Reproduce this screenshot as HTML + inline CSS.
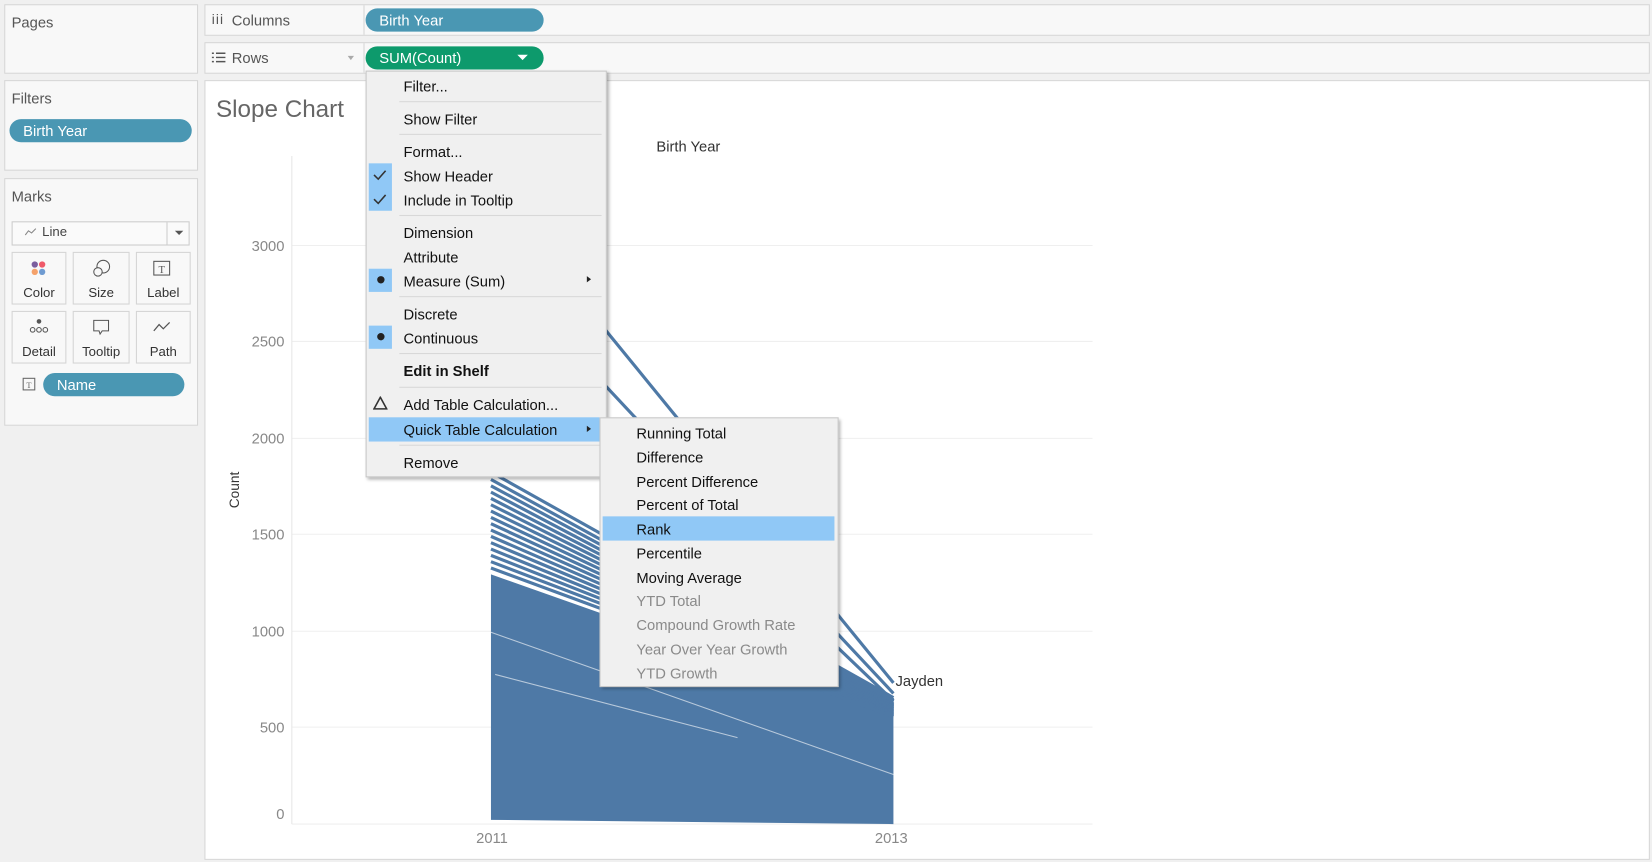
<!DOCTYPE html>
<html><head><meta charset="utf-8">
<style>
*{margin:0;padding:0;box-sizing:border-box}
html,body{width:1652px;height:862px;overflow:hidden;background:#f0f0f0}
body{font-family:"Liberation Sans",sans-serif;color:#333}
#s{position:absolute;left:0;top:0;width:1568px;height:818px;transform:scale(1.05357,1.0538);transform-origin:0 0;background:#f0f0f0}
.a{position:absolute}
.panel{position:absolute;background:#f8f8f8;border:1px solid #d6d6d6}
.t{position:absolute;font-size:14px;white-space:nowrap}
.pill{position:absolute;border-radius:12px;color:#fff;font-size:14px;padding-left:13px;line-height:22px}
.card{position:absolute;background:#f8f8f8;border:1px solid #d4d4d4;font-size:12.5px;text-align:center}
.card span{position:absolute;left:0;right:0;bottom:3px}
.mi{position:absolute;left:35px;font-size:14px;color:#111;white-space:nowrap}
.sep{position:absolute;left:31px;right:4px;height:1px;background:#d8d8d8}
.hl{position:absolute;background:#90c8f6}
.si{position:absolute;left:34px;font-size:14px;color:#111;white-space:nowrap}
.gr{color:#8a8a8a}
</style></head><body><div id="s">
<div class="panel" style="left:4px;top:4px;width:184px;height:66px"></div>
<div class="t" style="left:11px;top:13px;color:#555">Pages</div>
<div class="panel" style="left:4px;top:76px;width:184px;height:86px"></div>
<div class="t" style="left:11px;top:85px;color:#555">Filters</div>
<div class="pill" style="left:9px;top:113px;width:173px;background:#4a97b3">Birth Year</div>
<div class="panel" style="left:4px;top:169px;width:184px;height:235px"></div>
<div class="t" style="left:11px;top:178px;color:#555">Marks</div>
<div class="a" style="left:11px;top:210px;width:169px;height:23px;border:1px solid #ccc;background:#fafafa"></div>
<div class="a" style="left:158px;top:211px;width:1px;height:21px;background:#ccc"></div>
<svg class="a" style="left:23px;top:215px" width="12" height="10"><path d="M1 8 L4 4 L7 6 L11 2" stroke="#888" fill="none"/></svg>
<div class="t" style="left:40px;top:213px;font-size:12.5px;color:#444">Line</div>
<div class="a" style="left:166px;top:219px;border:4px solid transparent;border-top:4px solid #555;border-bottom:0"></div>
<div class="card" style="left:11px;top:239px;width:52px;height:50px"><span>Color</span></div>
<div class="card" style="left:69px;top:239px;width:54px;height:50px"><span>Size</span></div>
<div class="card" style="left:129px;top:239px;width:52px;height:50px"><span>Label</span></div>
<div class="card" style="left:11px;top:295px;width:52px;height:50px"><span>Detail</span></div>
<div class="card" style="left:69px;top:295px;width:54px;height:50px"><span>Tooltip</span></div>
<div class="card" style="left:129px;top:295px;width:52px;height:50px"><span>Path</span></div>
<svg class="a" style="left:28px;top:247px" width="18" height="18"><circle cx="5" cy="4" r="3" fill="#7b5e9e"/><circle cx="12" cy="4" r="3" fill="#ef5a6a"/><circle cx="5" cy="11" r="3" fill="#f5a26b"/><circle cx="12" cy="11" r="3" fill="#6f9bd1"/></svg>
<svg class="a" style="left:87px;top:245px" width="20" height="20"><circle cx="11" cy="8" r="6" stroke="#555" fill="none"/><circle cx="6" cy="13" r="4" stroke="#555" fill="#f8f8f8"/></svg>
<svg class="a" style="left:145px;top:246px" width="18" height="18"><rect x="1" y="2" width="15" height="13" stroke="#555" fill="none"/><text x="8.5" y="13" font-size="10" text-anchor="middle" fill="#555" font-family="Liberation Serif">T</text></svg>
<svg class="a" style="left:27px;top:302px" width="20" height="16"><circle cx="10" cy="3" r="2.2" fill="#555"/><circle cx="4" cy="11" r="2.2" stroke="#555" fill="none"/><circle cx="10" cy="11" r="2.2" stroke="#555" fill="none"/><circle cx="16" cy="11" r="2.2" stroke="#555" fill="none"/></svg>
<svg class="a" style="left:87px;top:302px" width="18" height="18"><path d="M2 2 H16 V12 H10 L8 15 L7 12 H2 Z" stroke="#555" fill="none"/></svg>
<svg class="a" style="left:145px;top:304px" width="18" height="12"><path d="M1 10 L6 4 L10 8 L16 2" stroke="#555" fill="none" stroke-width="1.2"/></svg>
<svg class="a" style="left:21px;top:358px" width="14" height="14"><rect x="1" y="1" width="11" height="11" stroke="#666" fill="none"/><text x="6.5" y="10" font-size="8" text-anchor="middle" fill="#666" font-family="Liberation Serif">T</text></svg>
<div class="pill" style="left:41px;top:354px;width:134px;background:#4a97b3">Name</div>

<div class="panel" style="left:194px;top:4px;width:1372px;height:30px;background:#f8f8f8"></div>
<div class="a" style="left:345px;top:5px;width:1px;height:28px;background:#d6d6d6"></div>
<div class="t" style="left:201px;top:11px;color:#555;font-size:13px;letter-spacing:1px">iii</div>
<div class="t" style="left:220px;top:11px;color:#555">Columns</div>
<div class="pill" style="left:347px;top:8px;width:169px;background:#4a97b3">Birth Year</div>
<div class="panel" style="left:194px;top:40px;width:1372px;height:30px;background:#f8f8f8"></div>
<div class="a" style="left:345px;top:41px;width:1px;height:28px;background:#d6d6d6"></div>
<svg class="a" style="left:201px;top:49px" width="13" height="11"><path d="M0 1.5h2M4 1.5h9M0 5.5h2M4 5.5h9M0 9.5h2M4 9.5h9" stroke="#555" stroke-width="1.4"/></svg>
<div class="t" style="left:220px;top:47px;color:#555">Rows</div>
<div class="a" style="left:330px;top:53px;border:3.5px solid transparent;border-top:4px solid #aaa;border-bottom:0"></div>
<div class="pill" style="left:347px;top:44px;width:169px;background:#0d9a6c">SUM(Count)</div>
<div class="a" style="left:491px;top:52px;border:5px solid transparent;border-top:5px solid #fff;border-bottom:0"></div>

<div class="panel" style="left:194px;top:76px;width:1372px;height:740px;background:#fff"></div>
<div class="t" style="left:205px;top:90px;font-size:23px;color:#666">Slope Chart</div>
<div class="t" style="left:623px;top:131px;color:#333">Birth Year</div>
<svg class="a" style="left:194px;top:76px" width="1372" height="740">
<g stroke="#efefef" stroke-width="1">
<line x1="83" y1="157" x2="843" y2="157"/><line x1="83" y1="248" x2="843" y2="248"/><line x1="83" y1="340" x2="843" y2="340"/><line x1="83" y1="431" x2="843" y2="431"/><line x1="83" y1="523" x2="843" y2="523"/><line x1="83" y1="614" x2="843" y2="614"/><line x1="83" y1="706" x2="843" y2="706"/>
</g>
<line x1="83" y1="72" x2="83" y2="706" stroke="#e6e6e6"/>
<g fill="#888" font-size="14" font-family="Liberation Sans" text-anchor="end">
<text x="76" y="162">3000</text><text x="76" y="253">2500</text><text x="76" y="345">2000</text><text x="76" y="436">1500</text><text x="76" y="528">1000</text><text x="76" y="619">500</text><text x="76" y="701">0</text>
</g>
<g fill="#888" font-size="14" font-family="Liberation Sans" text-anchor="middle"><text x="273" y="724">2011</text><text x="652" y="724">2013</text></g>
<text x="0" y="0" transform="translate(33,389) rotate(-90)" font-size="13" fill="#333" text-anchor="middle" font-family="Liberation Sans">Count</text>
<g transform="translate(-194,-76)">
<polygon points="466,545 848,680 848,782 466,778" fill="#4e79a6"/>
<g stroke="#4e79a6" stroke-width="3" fill="none">
<line x1="466" y1="180" x2="848" y2="648"/>
<line x1="466" y1="250" x2="848" y2="658"/>
<line x1="466" y1="300" x2="848" y2="665"/>
<line x1="466" y1="448" x2="848" y2="662"/>
<line x1="466" y1="455" x2="848" y2="664"/>
<line x1="466" y1="461" x2="848" y2="666"/>
<line x1="466" y1="467" x2="848" y2="668"/>
<line x1="466" y1="473" x2="848" y2="669"/>
<line x1="466" y1="479" x2="848" y2="670"/>
<line x1="466" y1="485" x2="848" y2="671"/>
<line x1="466" y1="491" x2="848" y2="672"/>
<line x1="466" y1="497" x2="848" y2="673"/>
<line x1="466" y1="503" x2="848" y2="674"/>
<line x1="466" y1="509" x2="848" y2="675"/>
<line x1="466" y1="515" x2="848" y2="676"/>
<line x1="466" y1="521" x2="848" y2="677"/>
<line x1="466" y1="527" x2="848" y2="678"/>
<line x1="466" y1="533" x2="848" y2="679"/>
<line x1="466" y1="539" x2="848" y2="680"/>
</g>
<g stroke="#fff" stroke-width="1" opacity="0.6"><line x1="466" y1="600" x2="848" y2="735"/><line x1="470" y1="640" x2="700" y2="700"/></g>
</g>
</svg>
<div class="t" style="left:850px;top:638px;color:#333">Jayden</div>

<div class="a" style="left:347px;top:67px;width:229px;height:386px;background:#f0f0f0;border:1px solid #c8c8c8;box-shadow:2px 2px 3px rgba(0,0,0,.3)">
<div class="a" style="left:2px;top:87px;width:22px;height:45px;background:#90c8f6"></div>
<div class="a" style="left:2px;top:187px;width:22px;height:22px;background:#90c8f6"></div>
<div class="a" style="left:2px;top:241px;width:22px;height:22px;background:#90c8f6"></div>
<div class="hl" style="left:2px;top:328px;width:219px;height:23px"></div>
<svg class="a" style="left:6px;top:92px" width="14" height="40"><path d="M1 6 L5 10 L12 2M1 29 L5 33 L12 25" stroke="#333" stroke-width="1.5" fill="none"/></svg>
<div class="a" style="left:10px;top:194px;width:7px;height:7px;border-radius:50%;background:#222"></div>
<div class="a" style="left:10px;top:248px;width:7px;height:7px;border-radius:50%;background:#222"></div>
<svg class="a" style="left:6px;top:308px" width="14" height="14"><path d="M7 1 L13 12 H1 Z" stroke="#333" stroke-width="1.5" fill="none"/></svg>
<div class="a" style="left:209px;top:194px;border:3px solid transparent;border-left:4px solid #222;border-right:0"></div>
<div class="a" style="left:209px;top:336px;border:3px solid transparent;border-left:4px solid #222;border-right:0"></div>
<div class="mi" style="top:6px">Filter...</div>
<div class="sep" style="top:28px"></div>
<div class="mi" style="top:37px">Show Filter</div>
<div class="sep" style="top:59px"></div>
<div class="mi" style="top:68px">Format...</div>
<div class="mi" style="top:91px">Show Header</div>
<div class="mi" style="top:114px">Include in Tooltip</div>
<div class="sep" style="top:136px"></div>
<div class="mi" style="top:145px">Dimension</div>
<div class="mi" style="top:168px">Attribute</div>
<div class="mi" style="top:191px">Measure (Sum)</div>
<div class="sep" style="top:213px"></div>
<div class="mi" style="top:222px">Discrete</div>
<div class="mi" style="top:245px">Continuous</div>
<div class="sep" style="top:267px"></div>
<div class="mi" style="top:276px;font-weight:bold">Edit in Shelf</div>
<div class="sep" style="top:299px"></div>
<div class="mi" style="top:308px">Add Table Calculation...</div>
<div class="mi" style="top:332px">Quick Table Calculation</div>
<div class="sep" style="top:354px"></div>
<div class="mi" style="top:363px">Remove</div>
</div>

<div class="a" style="left:569px;top:396px;width:227px;height:256px;background:#f0f0f0;border:1px solid #c8c8c8;box-shadow:2px 2px 3px rgba(0,0,0,.3)">
<div class="hl" style="left:2px;top:93px;width:220px;height:23px"></div>
<div class="si" style="top:6px">Running Total</div>
<div class="si" style="top:29px">Difference</div>
<div class="si" style="top:52px">Percent Difference</div>
<div class="si" style="top:74px">Percent of Total</div>
<div class="si" style="top:97px">Rank</div>
<div class="si" style="top:120px">Percentile</div>
<div class="si" style="top:143px">Moving Average</div>
<div class="si gr" style="top:165px">YTD Total</div>
<div class="si gr" style="top:188px">Compound Growth Rate</div>
<div class="si gr" style="top:211px">Year Over Year Growth</div>
<div class="si gr" style="top:234px">YTD Growth</div>
</div>
</div></body></html>
